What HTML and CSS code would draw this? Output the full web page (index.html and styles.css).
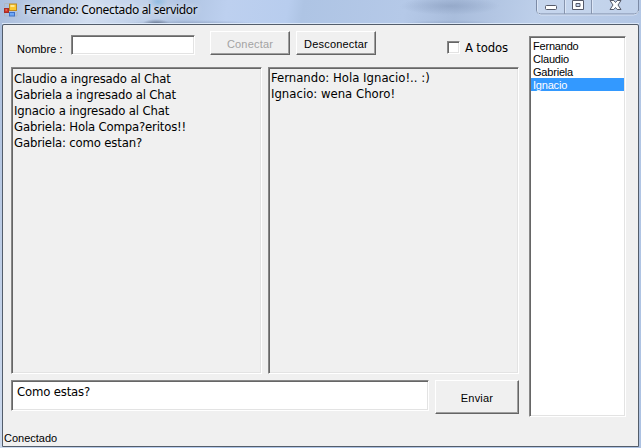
FILE: index.html
```html
<!DOCTYPE html>
<html lang="es">
<head>
<meta charset="utf-8">
<title>Fernando: Conectado al servidor</title>
<link rel="stylesheet" href="styles.css">
</head>
<body>
<div class="window">
  <header class="titlebar">
    <svg class="app-icon" width="14" height="14" viewBox="0 0 14 14">
      <path d="M.5 4V.5H5M.5 10v3H5M9 13h4V9" fill="none" stroke="#aeb7c3"/>
      <rect x=".5" y="5.500" width="4" height="4" fill="#cf3525" stroke="#a72b24"/>
      <rect x="1.500" y="6.500" width="1.500" height="1" fill="#f09a88"/>
      <rect x="5.500" y="1" width="7" height="6.500" fill="#fbc72f" stroke="#bd8921"/>
      <rect x="6.500" y="2" width="4" height="2" fill="#ffe991"/>
      <rect x="5.500" y="9.500" width="5" height="3.500" fill="#6ea7f5" stroke="#3e70c8"/>
    </svg>
    <h1 class="title">Fernando: Conectado al servidor</h1>
    <svg class="controls" width="103" height="16" viewBox="0 0 103 16">
      <path d="M.5 0v10q0 4 4 4h94q4 0 4-4V0" fill="#d5e0f2" fill-opacity=".4" stroke="#7c8ba6"/>
      <path d="M1.500 0v10q0 5 4 5h92q4 0 5-4" fill="none" stroke="#e5edfa" stroke-opacity=".7"/>
      <path d="M28.500 0v14M55.500 0v14" stroke="#8795ae"/>
      <path d="M29.500 0v13M56.500 0v13" stroke="#dce6f6"/>
      <rect x="9.500" y="5.500" width="11" height="4" rx="1" fill="#fff" stroke="#555968"/>
      <path fill-rule="evenodd" d="M36.500 .5h11v9h-11zM40 3.500v3h4v-3z" fill="#fff" stroke="#555968"/>
      <path d="M74 .5h3.800L79.500 2.500 81.200.5H85L82 5 85 9.500h-3.800L79.500 7.500l-1.700 2H74L77 5z" fill="#fff" stroke="#555968"/>
    </svg>
  </header>
  <main class="client">
    <div class="columns">
      <section class="chat">
        <div class="toolbar">
          <label class="name-label" for="nombre">Nombre :</label>
          <input class="name-input sunken" id="nombre" type="text">
          <button class="button connect" disabled><span>Conectar</span></button>
          <button class="button disconnect"><span>Desconectar</span></button>
          <span class="checkbox sunken"></span>
          <span class="all-label">A todos</span>
        </div>
        <div class="logs">
          <div class="log sunken">
            <p>Claudio a ingresado al Chat</p>
            <p>Gabriela a ingresado al Chat</p>
            <p>Ignacio a ingresado al Chat</p>
            <p>Gabriela: Hola Compa?eritos!!</p>
            <p>Gabriela: como estan?</p>
          </div>
          <div class="log log-private sunken">
            <p>Fernando: Hola Ignacio!.. :)</p>
            <p>Ignacio: wena Choro!</p>
          </div>
        </div>
        <div class="composer">
          <div class="message sunken">Como estas?</div>
          <button class="button send"><span>Enviar</span></button>
        </div>
      </section>
      <ul class="users sunken">
        <li>Fernando</li>
        <li>Claudio</li>
        <li>Gabriela</li>
        <li class="selected">Ignacio</li>
      </ul>
    </div>
    <footer class="status">Conectado</footer>
  </main>
</div>
</body>
</html>
```
FILE: styles.css
```css
* { box-sizing: border-box; }
body { margin: 0; font: 12px/16px "Liberation Sans", sans-serif; color: #000; overflow: hidden; }
h1, p, ul { margin: 0; padding: 0; font-weight: normal; }
.window {
  width: 641px; height: 448px; padding: 0 2px 1px 2px;
  background:
    radial-gradient(ellipse 14px 5px at 156px 24px, #66758f 0, transparent 100%),
    radial-gradient(ellipse 70px 4px at 190px 24px, #8294b4aa 0, transparent 100%),
    radial-gradient(ellipse 10px 8px at 158px 2px, #7fb5e0aa 0, transparent 100%),
    radial-gradient(ellipse 50px 9px at 450px 6px, #8b9fc0aa 0, transparent 100%),
    radial-gradient(ellipse 50px 4px at 450px 24px, #8b9fc0aa 0, transparent 100%),
    linear-gradient(100deg, #a9bddc 0, #d2def0 90px, #b1c5e3 185px, #bdd0ef 225px, #b8cdee 285px, #aec4e4 300px, #b5c9e8 400px, #a9bddc 450px, #bdcfea 530px, #adc2e2 100%);
}
.titlebar { display: flex; height: 24px; padding-left: 2px; border-bottom: 1px solid #dce8f8; }
.app-icon { margin-top: 3px; flex: none; }
.title { margin: 1px 0 0 6px; font-size: 12px; line-height: 18px; font-family: "Noto Sans", sans-serif; letter-spacing: -.32px; white-space: nowrap; text-shadow: 0 0 6px #fff; }
.controls { margin-left: auto; flex: none; }
.client { height: 423px; background: #f0f0f0; border: 1px solid #535d6b; padding: 6px 12px 0 8px; display: flex; flex-direction: column; border-radius: 2px 2px 0 0; }
.columns { display: flex; gap: 9px; height: 389px; }
.chat { width: 509px; }
.sunken { border: 1px solid; border-color: #878787 #fff #fff #878787; box-shadow: inset 1px 1px #666, inset -1px -1px #e3e3e3; }
.toolbar { display: flex; height: 36px; align-items: flex-start; }
.name-label { width: 60px; padding: 9px 0 0 6px; font: 11px/18px "Liberation Sans", sans-serif; letter-spacing: .05px; white-space: nowrap; }
.name-input { width: 124px; height: 20px; margin-top: 4px; padding: 2px; background: #fff; }
.button { padding: 1px 0 0; background: #f0f0f0; border: 1px solid; border-color: #fff #656565 #656565 #fff; box-shadow: inset -1px -1px #9f9f9f; font: 11px/14px "Liberation Sans", sans-serif; letter-spacing: .2px; color: #000; border-radius: 0; }
.connect { width: 80px; height: 24px; margin-left: 15px; color: #a3a3a3; }
.disconnect { width: 80px; height: 24px; margin-left: 6px; }
.checkbox { width: 13px; height: 13px; margin: 10px 0 0 71px; background: #fff; }
.all-label, .log, .message { font: 13px/16px "DejaVu Sans Condensed", "DejaVu Sans", sans-serif; letter-spacing: -.17px; white-space: nowrap; }
.all-label { margin: 9px 0 0 5px; }
.logs { display: flex; gap: 6px; height: 307px; }
.log { width: 251px; padding: 3px 2px; }
.log-private { padding-top: 2px; letter-spacing: 0; }
.composer { display: flex; gap: 6px; padding-top: 6px; }
.message { width: 418px; height: 31px; padding: 3px 5px; background: #fff; }
.send { width: 84px; height: 34px; }
.users { width: 97px; height: 381px; margin-top: 5px; padding: 2px 1px; background: #fff; list-style: none; }
.users li { height: 13px; padding: 1px 0 0 2px; font: 11px/12px "Liberation Sans", sans-serif; letter-spacing: -.2px; }
.users .selected { background: #3399ff; color: #fff; }
.status { margin: 12px 0 0 -7px; font: 11px/18px "Liberation Sans", sans-serif; }
```
